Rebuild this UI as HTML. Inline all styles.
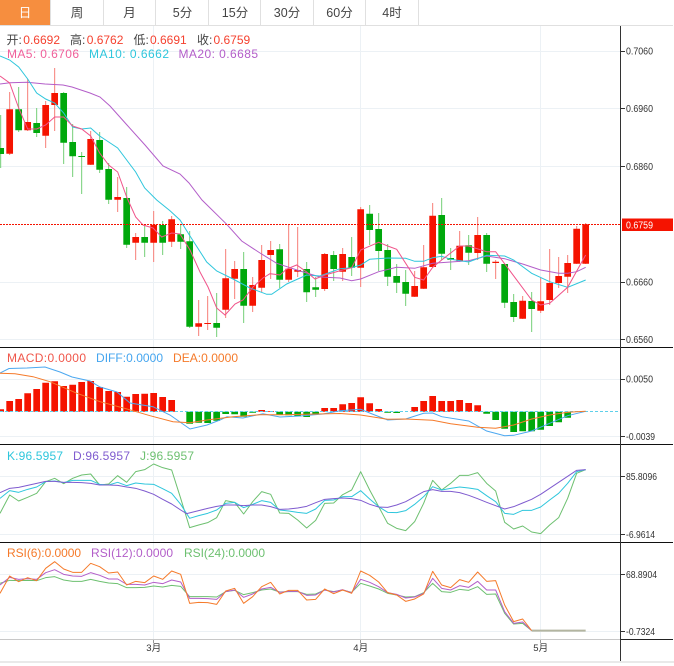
<!DOCTYPE html>
<html lang="zh">
<head>
<meta charset="utf-8">
<title>K线图</title>
<style>
html,body{margin:0;padding:0;background:#fff;width:674px;height:666px;overflow:hidden}
svg{display:block;position:absolute;left:0;top:0}
text{font-family:"Liberation Sans","Noto Sans CJK SC",sans-serif}
.ax{font-size:10px;fill:#333}
.lg{font-size:12px}
.tab{font-size:12.5px;fill:#444;text-anchor:middle}
.ln{fill:none;stroke-width:3;stroke-linejoin:round}
</style>
</head>
<body>
<svg width="674" height="666" viewBox="0 0 674 666" xmlns="http://www.w3.org/2000/svg">
<rect width="674" height="666" fill="#fff"/>

<!-- tabs -->
<rect x="0" y="0" width="50" height="25" fill="#f68e3f"/>
<path d="M50.5 0V25M103.5 0V25M155.5 0V25M208.5 0V25M260.5 0V25M313.5 0V25M365.5 0V25M418.5 0V25M0 25.5H673" stroke="#e0e0e0" fill="none"/>
<text class="tab" x="25" y="17" style="fill:#fff">日</text>
<text class="tab" x="77" y="17">周</text>
<text class="tab" x="129.5" y="17">月</text>
<text class="tab" x="182.5" y="17">5分</text>
<text class="tab" x="235" y="17">15分</text>
<text class="tab" x="287" y="17">30分</text>
<text class="tab" x="339.5" y="17">60分</text>
<text class="tab" x="392" y="17">4时</text>

<!-- grid -->
<path d="M0 51.5H621M0 108.5H621M0 166.5H621M0 282.5H621M0 339.5H621M0 379.5H621M0 436.5H621M0 476.5H621M0 534.5H621M0 574.5H621M0 631.5H621" stroke="#ecf1f5" fill="none"/>
<path d="M153.5 26V639M360.5 26V639M540.5 26V639" stroke="#ecf1f5" fill="none"/>

<!-- wicks -->
<g fill="none" stroke-width="1">
<path stroke="#f77f78" d="M9.67 92V155M27.67 79V131M45.67 101V148M54.67 68V131M90.67 131V165M117.67 177V212M135.67 233V260M153.67 211V262M171.67 216V247M198.67 300V336M207.67 296V330M225.67 249V318M234.67 261V299M252.67 277V312M261.67 245V292M270.67 241V279M288.67 224V282M297.67 227V277M324.67 253V291M342.67 248V281M360.67 207V287M414.67 271V297M423.67 245V289M432.67 203V268M459.67 231V262M477.67 217V260M495.67 260V279M522.67 296V319M540.67 278V313M549.67 249V305M558.67 257V288M567.67 255V293M576.67 226V264M585.67 223V264"/>
<path stroke="#74cf78" d="M.67 115V168M18.67 87V132M36.67 108V137M63.67 92V164M72.67 124V177M81.67 152V194M99.67 132V173M108.67 163V204M126.67 187V248M144.67 226V257M162.67 221V255M180.67 224V249M189.67 231V328M216.67 293V337M243.67 252V323M279.67 244V288M306.67 262V302M315.67 277V297M333.67 251V281M351.67 237V276M369.67 205V245M378.67 213V271M387.67 244V286M396.67 264V293M405.67 270V306M441.67 198V260M450.67 248V270M468.67 235V265M486.67 233V272M504.67 264V308M513.67 294V322M531.67 292V332"/>
</g>
<!-- bodies -->
<path fill="none" stroke="#f51300" stroke-width="6.7" d="M9.67 109.3V153.7M27.67 122V130.3M45.67 105V135.7M54.67 93V105M90.67 139V164.7M117.67 197V199.7M135.67 237V242.7M153.67 224.7V242.7M171.67 219.3V241.7M198.67 323.3V326.7M207.67 323V324M225.67 278.3V309.7M234.67 269V278.7M252.67 285V305.7M261.67 260V287.7M270.67 250V255M288.67 268.7V279.7M297.67 270V271.7M324.67 254V289M342.67 254V271.7M360.67 209.3V267.7M414.67 286V296.7M423.67 267.3V288.7M432.67 215.7V267M459.67 245.7V261M477.67 235V253M495.67 261.7V263M522.67 300.7V318.7M540.67 301.3V310.7M549.67 283V300M558.67 276V283M567.67 263V276.7M576.67 228.7V263.7M585.67 224.3V263.7"/>
<path fill="none" stroke="#00a80c" stroke-width="6.7" d="M.67 148V154M18.67 109.3V130.3M36.67 123V133M63.67 93V142.7M72.67 142V156.3M81.67 156V157M99.67 140V169.7M108.67 169V199.7M126.67 198V244.7M144.67 237V242.7M162.67 225V242.7M180.67 234.3V241.7M189.67 241.3V326.7M216.67 323V327.7M243.67 269V305.7M279.67 249.3V279.7M306.67 269V292.3M315.67 287.3V289.7M333.67 255V269M351.67 257V267.7M369.67 213.7V230M378.67 229V251M387.67 250V276.7M396.67 276V282.7M405.67 282V293.7M441.67 215V253.7M450.67 258V259.7M468.67 245.3V252.7M486.67 235V263.7M504.67 264V302.7M513.67 302V317M531.67 301V309"/>

<!-- moving averages -->
<polyline fill="none" stroke="#b35ec9" stroke-width="1" points="0,84 10,82.7 27,82.3 45,84 63,85 72,87 90,93 100,97 110,106 127,125 145,145 163,166 180,174 189,183 202,200 226.7,224.3 241.7,241 260,253 276.7,263.3 300,271 320,277 340,278 351.67,280.7 360.67,279 378.67,271.7 396.67,267.3 414.67,268.3 432.67,263.3 450.67,262 468.67,260.7 486.67,256 504.67,258.7 522.67,264 540.67,270 558.67,273.3 567.67,273.3 576.67,271.7 585.67,267.3"/>
<polyline fill="none" stroke="#2ec6dc" stroke-width="1" points="0,56 9.67,60 18.67,67 27.67,79 36.67,93 45.67,99 54.67,103 63.67,113 72.67,127 81.67,129 90.67,128 99.67,136 108.67,142 117.67,148 126.67,160 135.67,172 144.67,188 156.7,200 170,210.7 180,220 190,236 206.7,262 216.7,271 233,279 250,288 266.7,294.3 271.7,294.3 286.7,284 306.7,275 320,276 340,268.7 351.67,267.7 360.67,265 369.67,259.3 387.67,258 405.67,258.3 414.67,261.3 423.67,261.3 432.67,257.7 441.67,256.3 450.67,259.3 468.67,262 486.67,255.3 504.67,256 513.67,260 531.67,273.3 549.67,281.7 567.67,287.3 585.67,280"/>
<polyline fill="none" stroke="#f0548a" stroke-width="1" points="0,76 9.67,83 18.67,108 27.67,129 36.67,129 45.67,125 54.67,117 63.67,117 72.67,126 81.67,129 90.67,136 99.67,153 108.67,165 117.67,172 126.67,197 135.67,217 143,225 153,228 161.7,237 171.7,233 180,234 190,250 200,272 208,287 216.7,308 225,315 235,304 243,300 253,287 263,278 270,273.7 280,275 286.7,269 296.7,265 306.7,272 315,279 325,275 342.67,270 351.67,267.7 360.67,250 378.67,242.3 387.67,246 396.67,249.3 414.67,277.3 423.67,280 432.67,267.3 441.67,260 459.67,246 468.67,246 486.67,251.7 495.67,251.7 531.67,300 540.67,305 549.67,303.3 567.67,287.3 585.67,255"/>

<!-- current price -->
<path d="M0 224.5H621" stroke="#f51300" stroke-dasharray="2 1" fill="none"/>

<!-- MACD bars -->
<path fill="none" stroke="#f51300" stroke-width="6.7" d="M.67 409.3V411.7M9.67 401V411.7M18.67 399V411.7M27.67 393.3V411.7M36.67 389V411.7M45.67 382.7V411.7M54.67 381.3V411.7M63.67 386V411.7M72.67 384.7V411.7M81.67 382V411.7M90.67 381V411.7M99.67 387V411.7M108.67 391V411.7M117.67 392V411.7M126.67 396.7V411.7M135.67 394V411.7M144.67 393.7V411.7M153.67 393V411.7M162.67 397V411.7M171.67 400V411.7M261.67 410V411.7M270.67 411V411.7M324.67 408V411.7M333.67 408V411.7M342.67 404.3V411.7M351.67 403V411.7M360.67 397.3V411.7M369.67 403.3V411.7M378.67 409V411.7M414.67 407V411.7M423.67 401V411.7M432.67 396V411.7M441.67 401V411.7M450.67 401V411.7M459.67 400V411.7M468.67 403V411.7M477.67 405.3V411.7"/>
<path fill="none" stroke="#00a80c" stroke-width="6.7" d="M189.67 411.7V423.7M198.67 411.7V422.7M207.67 411.7V423M216.67 411.7V420.7M225.67 411.7V414M234.67 411.7V414.3M243.67 411.7V416.7M252.67 411.7V412.7M279.67 411.7V415M288.67 411.7V415.3M297.67 411.7V416.3M306.67 411.7V417M315.67 411.7V414M387.67 411.7V412.7M396.67 411.7V413M486.67 411.7V413.7M495.67 411.7V420M504.67 411.7V428.7M513.67 411.7V432M522.67 411.7V431.3M531.67 411.7V431.3M540.67 411.7V429.7M549.67 411.7V426M558.67 411.7V422.3M567.67 411.7V417.7"/>
<path d="M0 411.5H620" stroke="#5fd0ea" stroke-dasharray="3 2" fill="none"/>
<polyline fill="none" stroke="#4ca8f0" stroke-width="1" points="0,373 9,368.5 27,368 45,367 60,372 72,377 90,381 100,387 117,392 130,403 153,406.7 170,415 180,422 190,429 207,425 220,420 227,416.7 243,418 263,413.7 280,417 300,416 323,414 340,410.7 360.67,409.3 369.67,413 387.67,420 405.67,419 423.67,413.3 432.67,413 441.67,416.7 468.67,421 486.67,431 504.67,435.7 513.67,435.3 531.67,431 549.67,423.3 567.67,415.7 585.67,411.3"/>
<polyline fill="none" stroke="#f57a2a" stroke-width="1" points="0,373.3 15,373.7 33,376.7 50,381.7 77,393.3 100,401.7 127,409 150,415.7 173,421.7 190,422.7 207,420 233,416.7 260,414.7 283,414.7 317,414 340,413.5 360.67,415 387.67,419.3 405.67,419 432.67,420.3 450.67,423.7 477.67,427.3 495.67,428.3 513.67,425 531.67,419 549.67,415 567.67,412.3 585.67,411.3"/>

<!-- KDJ -->
<g transform="translate(0,445) scale(.33333)">
<polyline class="ln" stroke="#6dc070" points="0,205 29,150 56,168 83,157 110,145 137,110 164,100 191,116 218,100 245,90 272,87 299,120 326,117 353,92 380,112 407,80 434,74 461,57 488,68 515,75 542,160 569,248 596,240 623,233 650,218 677,167 704,172 731,207 758,170 785,140 812,148 839,204 866,205 893,225 920,249 947,226 974,175 1001,174 1028,149 1055,135 1082,80 1109,135 1136,185 1163,235 1190,250 1217,257 1244,230 1271,175 1298,106 1325,135 1352,115 1379,91 1406,91 1433,83 1460,115 1487,138 1514,232 1541,252 1568,243 1595,261 1622,266 1649,240 1676,218 1703,160 1730,85 1757,74"/>
<polyline class="ln" stroke="#2ec6dc" points="0,160 29,137 56,142 83,133 110,126 137,110 164,108 191,113 218,106 245,106 272,106 299,118 326,120 353,112 380,122 407,114 434,117 461,118 488,131 515,145 542,178 569,220 596,212 623,205 650,195 677,175 704,172 731,188 758,178 785,167 812,172 839,195 866,198 893,202 920,205 947,192 974,166 1001,165 1028,155 1055,155 1082,137 1109,162 1136,185 1163,202 1190,203 1217,197 1244,178 1271,155 1298,125 1325,135 1352,130 1379,126 1406,129 1433,133 1460,152 1487,170 1514,205 1541,208 1568,196 1595,196 1622,186 1649,165 1676,145 1703,115 1730,80 1757,74"/>
<polyline class="ln" stroke="#7f5bcf" points="0,143 29,130 56,127 83,121 110,115 137,109 164,109 191,112 218,112 245,113 272,115 299,120 326,120 353,121 380,126 407,130 434,138 461,148 488,163 515,177 542,195 560,206 596,197 623,190 650,184 677,180 704,180 731,182 758,180 785,180 812,185 839,193 866,192 893,189 920,184 947,173 974,163 1001,161 1028,159 1055,161 1082,166 1109,178 1136,186 1163,187 1190,180 1217,170 1244,155 1271,140 1298,134 1325,139 1352,139 1379,143 1406,151 1433,161 1460,172 1487,182 1514,192 1541,185 1568,174 1595,163 1622,148 1649,130 1676,112 1703,94 1730,76 1757,74"/>
</g>

<!-- RSI -->
<g transform="translate(0,540) scale(.33333)">
<polyline class="ln" stroke="#6dc070" points="0,130 29,121 56,122 83,121 110,122 137,113 164,110 191,120 218,124 245,124 272,118 299,124 326,129 353,131 380,143 407,143 434,142 461,138 488,141 515,136 542,139 569,170 596,170 623,170 650,171 677,155 704,151 731,164 758,158 785,150 812,147 839,156 866,155 893,155 920,163 947,162 974,150 1001,155 1028,150 1055,157 1082,130 1109,138 1136,147 1163,160 1190,165 1217,171 1244,170 1271,158 1298,130 1325,155 1352,157 1379,148 1406,151 1433,140 1460,163 1487,162 1514,220 1541,252 1568,250 1595,272"/>
<polyline class="ln" stroke="#b35ec9" points="0,135 29,112 56,118 83,116 110,118 137,98 164,89 191,103 218,108 245,109 272,98 299,106 326,117 353,117 380,133 407,133 434,135 461,127 488,131 515,120 542,126 569,175 596,175 623,176 650,178 677,155 704,150 731,172 758,162 785,147 812,142 839,157 866,154 893,154 920,166 947,165 974,150 1001,156 1028,149 1055,158 1082,118 1109,127 1136,140 1163,158 1190,163 1217,174 1244,171 1271,160 1298,115 1325,145 1352,150 1379,137 1406,142 1433,124 1460,150 1487,150 1514,215 1541,250 1568,246 1595,272"/>
<polyline class="ln" stroke="#f57a2a" points="0,160 29,108 56,125 83,113 110,122 137,85 164,65 191,87 218,97 245,97 272,70 299,80 326,99 353,96 380,135 407,124 434,128 461,108 488,118 515,93 542,103 569,190 596,187 623,188 650,193 677,153 704,145 731,190 758,170 785,140 812,127 839,162 866,151 893,151 920,180 947,178 974,147 1001,161 1028,150 1055,160 1082,93 1109,106 1136,126 1163,158 1190,165 1217,184 1244,177 1271,162 1298,94 1325,135 1352,143 1379,119 1406,127 1433,96 1460,124 1487,122 1514,195 1541,245 1568,237 1595,272"/>
<path d="M1595 272H1757" stroke="#b3b5a0" stroke-width="6" fill="none"/>
</g>

<!-- frame lines -->
<path d="M0 347.5H673M0 444.5H673M0 542.5H673" stroke="#111" fill="none"/>
<path d="M0 639.5H620" stroke="#c8c8c8" fill="none"/>
<path d="M621 639.5H673" stroke="#222" fill="none"/>
<path d="M0 662H674" stroke="#e2e2e2" stroke-width="1.5" fill="none"/>
<path d="M620.5 26V661" stroke="#333" fill="none"/>
<path d="M153.5 640V643M360.5 640V643M540.5 640V643" stroke="#999" fill="none"/>
<path d="M621 51.5H625M621 108.5H625M621 166.5H625M621 282.5H625M621 339.5H625M621 379.5H625M621 436.5H625M621 476.5H625M621 534.5H625M621 574.5H625M621 631.5H625" stroke="#333" fill="none"/>

<!-- price tag -->
<rect x="622" y="218.5" width="51" height="12.5" fill="#f51300"/>
<text class="ax" x="626" y="228.5" textLength="27" lengthAdjust="spacingAndGlyphs" style="fill:#fff">0.6759</text>

<!-- axis labels -->
<text class="ax" x="626" y="54.5" textLength="27" lengthAdjust="spacingAndGlyphs">0.7060</text>
<text class="ax" x="626" y="112" textLength="27" lengthAdjust="spacingAndGlyphs">0.6960</text>
<text class="ax" x="626" y="170" textLength="27" lengthAdjust="spacingAndGlyphs">0.6860</text>
<text class="ax" x="626" y="285.5" textLength="27" lengthAdjust="spacingAndGlyphs">0.6660</text>
<text class="ax" x="626" y="343" textLength="27" lengthAdjust="spacingAndGlyphs">0.6560</text>
<text class="ax" x="626" y="382.5" textLength="27" lengthAdjust="spacingAndGlyphs">0.0050</text>
<text class="ax" x="626" y="440" textLength="29" lengthAdjust="spacingAndGlyphs">-0.0039</text>
<text class="ax" x="626" y="480" textLength="31" lengthAdjust="spacingAndGlyphs">85.8096</text>
<text class="ax" x="626" y="538" textLength="29" lengthAdjust="spacingAndGlyphs">-6.9614</text>
<text class="ax" x="626" y="578" textLength="31" lengthAdjust="spacingAndGlyphs">68.8904</text>
<text class="ax" x="626" y="635" textLength="29" lengthAdjust="spacingAndGlyphs">-0.7324</text>

<!-- x labels -->
<text class="ax" x="153.7" y="651" text-anchor="middle" style="font-size:9.5px">3月</text>
<text class="ax" x="360.7" y="651" text-anchor="middle" style="font-size:9.5px">4月</text>
<text class="ax" x="540.7" y="651" text-anchor="middle" style="font-size:9.5px">5月</text>

<!-- legends -->
<g class="lg">
<text class="lg" x="6.5" y="44" fill="#444">开:</text><text class="lg" x="23.3" y="44" fill="#f5412f">0.6692</text>
<text class="lg" x="70" y="44" fill="#444">高:</text><text class="lg" x="86.7" y="44" fill="#f5412f">0.6762</text>
<text class="lg" x="133.5" y="44" fill="#444">低:</text><text class="lg" x="150" y="44" fill="#f5412f">0.6691</text>
<text class="lg" x="197" y="44" fill="#444">收:</text><text class="lg" x="213.5" y="44" fill="#f5412f">0.6759</text>
<text class="lg" x="7" y="58" fill="#f0609a" textLength="72">MA5: 0.6706</text>
<text class="lg" x="89" y="58" fill="#2ec6dc" textLength="80">MA10: 0.6662</text>
<text class="lg" x="178.5" y="58" fill="#b35ec9" textLength="79.5">MA20: 0.6685</text>
<text class="lg" x="7" y="362" fill="#f0564a" textLength="79">MACD:0.0000</text>
<text class="lg" x="96" y="362" fill="#44a5ef" textLength="67">DIFF:0.0000</text>
<text class="lg" x="173" y="362" fill="#f57a2a" textLength="65">DEA:0.0000</text>
<text class="lg" x="7" y="460" fill="#2ec6dc" textLength="56">K:96.5957</text>
<text class="lg" x="73" y="460" fill="#7f5bcf" textLength="57">D:96.5957</text>
<text class="lg" x="140" y="460" fill="#6dc070" textLength="54">J:96.5957</text>
<text class="lg" x="7" y="557" fill="#f57a2a" textLength="74">RSI(6):0.0000</text>
<text class="lg" x="91" y="557" fill="#b35ec9" textLength="82">RSI(12):0.0000</text>
<text class="lg" x="184" y="557" fill="#6dc070" textLength="81">RSI(24):0.0000</text>
</g>
</svg>
</body>
</html>
